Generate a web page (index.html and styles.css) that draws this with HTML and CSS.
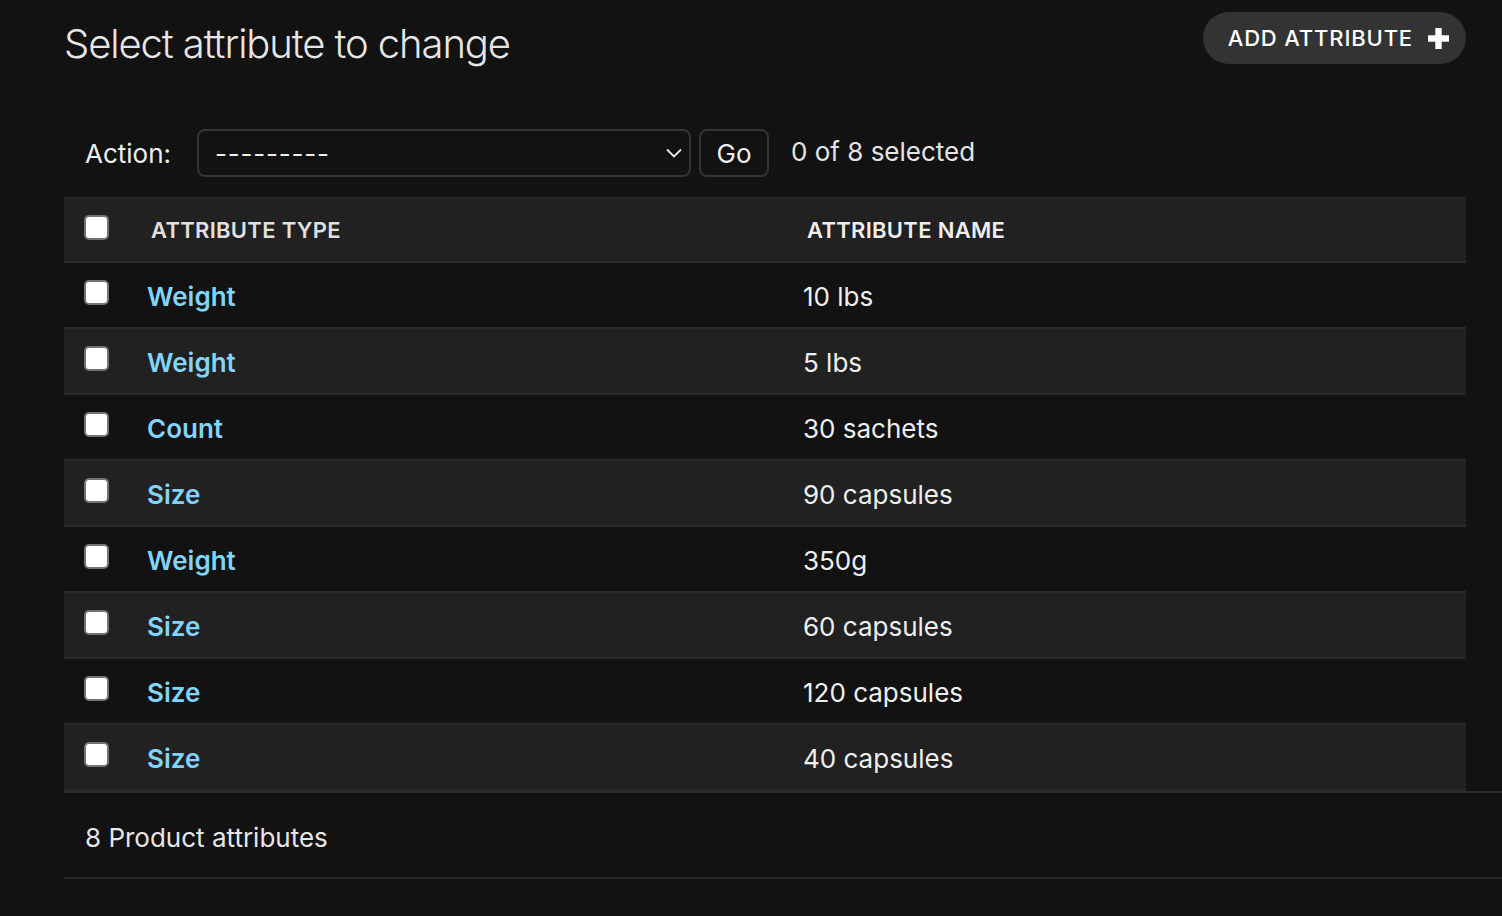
FILE: index.html
```html
<!DOCTYPE html>
<html lang="en">
<head>
<meta charset="utf-8">
<title>Select attribute to change</title>
<link rel="stylesheet" href="styles.css">
</head>
<body>
<div class="page">
  <header class="top">
    <h1 class="title">Select attribute to change</h1>
    <a class="addlink" href="#">ADD ATTRIBUTE
      <svg class="plus" width="21" height="21" viewBox="0 0 21 21" aria-hidden="true">
        <rect x="7.3" y="0" width="6.4" height="21" fill="#ffffff"/>
        <rect x="0" y="7.3" width="21" height="6.4" fill="#ffffff"/>
      </svg>
    </a>
  </header>
  <form class="changelist">
    <div class="actions">
      <label class="action-label">Action:</label>
      <div class="select-wrap">
        <select class="action-select"><option>---------</option></select>
        <svg class="chevron" width="16" height="10" viewBox="0 0 16 10" aria-hidden="true">
          <path d="M1 1.5 L8 8.5 L15 1.5" fill="none" stroke="#e8e8e8" stroke-width="1.8"/>
        </svg>
      </div>
      <button type="button" class="go">Go</button>
      <span class="counter">0 of 8 selected</span>
    </div>
    <table class="results">
      <thead>
        <tr>
          <th class="col-check"><input type="checkbox" class="cb"></th>
          <th class="col-type">ATTRIBUTE TYPE</th>
          <th class="col-name">ATTRIBUTE NAME</th>
        </tr>
      </thead>
      <tbody>
        <tr><td class="col-check"><input type="checkbox" class="cb"></td><td class="col-type"><a href="#">Weight</a></td><td class="col-name">10 lbs</td></tr>
        <tr><td class="col-check"><input type="checkbox" class="cb"></td><td class="col-type"><a href="#">Weight</a></td><td class="col-name">5 lbs</td></tr>
        <tr><td class="col-check"><input type="checkbox" class="cb"></td><td class="col-type"><a href="#">Count</a></td><td class="col-name">30 sachets</td></tr>
        <tr><td class="col-check"><input type="checkbox" class="cb"></td><td class="col-type"><a href="#">Size</a></td><td class="col-name">90 capsules</td></tr>
        <tr><td class="col-check"><input type="checkbox" class="cb"></td><td class="col-type"><a href="#">Weight</a></td><td class="col-name">350g</td></tr>
        <tr><td class="col-check"><input type="checkbox" class="cb"></td><td class="col-type"><a href="#">Size</a></td><td class="col-name">60 capsules</td></tr>
        <tr><td class="col-check"><input type="checkbox" class="cb"></td><td class="col-type"><a href="#">Size</a></td><td class="col-name">120 capsules</td></tr>
        <tr><td class="col-check"><input type="checkbox" class="cb"></td><td class="col-type"><a href="#">Size</a></td><td class="col-name">40 capsules</td></tr>
      </tbody>
    </table>
    <p class="paginator">8 Product attributes</p>
  </form>
</div>
</body>
</html>
```
FILE: styles.css
```css
html, body {
  margin: 0;
  padding: 0;
  background: #121212;
}
body {
  color: #eeeeee;
  font-family: Inter, "Noto Sans", "Liberation Sans", sans-serif;
  font-size: 26px;
}
.page {
  padding: 0 36px 0 64px;
}
.top {
  display: flex;
  justify-content: space-between;
  align-items: flex-start;
  padding-top: 12px;
}
.title {
  margin: 6px 0 0;
  font-size: 40px;
  line-height: 52px;
  font-weight: 300;
  color: #e6e6e6;
  letter-spacing: -1.1px;
}
.addlink {
  display: flex;
  align-items: center;
  gap: 15px;
  height: 52px;
  box-sizing: border-box;
  padding: 0 17px 0 25px;
  border-radius: 26px;
  background: #333333;
  color: #ffffff;
  text-decoration: none;
  font-size: 22px;
  font-weight: 500;
  letter-spacing: 0.85px;
}
.plus {
  display: block;
  margin-top: 1px;
}
.actions {
  display: flex;
  align-items: center;
  height: 48px;
  margin-top: 59px;
  margin-bottom: 20px;
  padding-left: 21px;
}
.action-label {
  width: 112px;
  font-size: 26px;
  color: #eeeeee;
}
.select-wrap {
  position: relative;
  width: 494px;
  height: 48px;
}
.action-select {
  -webkit-appearance: none;
  appearance: none;
  width: 100%;
  height: 48px;
  box-sizing: border-box;
  background: #121212;
  border: 2px solid #353535;
  border-radius: 8px;
  color: #eeeeee;
  font-family: inherit;
  font-size: 26px;
  letter-spacing: 0.8px;
  padding: 0 40px 0 16px;
}
.chevron {
  position: absolute;
  right: 9px;
  top: 19px;
}
.go {
  margin-left: 8px;
  width: 70px;
  height: 48px;
  box-sizing: border-box;
  background: #121212;
  border: 2px solid #353535;
  border-radius: 8px;
  color: #eeeeee;
  font-family: inherit;
  font-size: 26px;
  padding: 0;
}
.counter {
  margin-left: 22px;
  font-size: 26px;
  color: #e4e4e4;
  margin-top: -4px;
}
.results {
  width: 100%;
  border-collapse: collapse;
  table-layout: fixed;
}
.results th {
  background: #212121;
  height: 63px;
  padding: 0;
  border-top: 1px solid #2a2a2a;
  border-bottom: 2px solid #2b2b2b;
  text-align: left;
  font-size: 22px;
  line-height: 28px;
  font-weight: 600;
  color: #e0e0e0;
  letter-spacing: 0.3px;
}
.results td {
  height: 60px;
  padding: 4px 0 0;
  border-bottom: 2px solid #2a2a2a;
  font-size: 26px;
  line-height: 32px;
  vertical-align: middle;
}
.results tbody tr:nth-child(even) td {
  background: #212121;
}
.results .col-check {
  width: 65px;
  box-sizing: border-box;
  padding-left: 20px;
  vertical-align: top;
  padding-top: 17px;
}
.results td.col-check {
  height: 64px;
}
.results .col-type {
  width: 656px;
  box-sizing: border-box;
  padding-left: 18px;
}
.results th.col-type,
.results th.col-name {
  padding-left: 22px;
}
.results .col-name {
  padding-left: 18px;
  color: #eeeeee;
}
.results a {
  color: #81d4fa;
  font-weight: 600;
  text-decoration: none;
}
.cb {
  -webkit-appearance: none;
  appearance: none;
  display: block;
  margin: 0;
  width: 25px;
  height: 25px;
  box-sizing: border-box;
  background: #ffffff;
  border: 2px solid #737373;
  border-radius: 5px;
}
.paginator {
  margin: 0 -36px 0 0;
  display: flex;
  align-items: center;
  padding: 4px 0 0 21px;
  box-sizing: content-box;
  border-top: 2px solid #2a2a2a;
  border-bottom: 2px solid #2a2a2a;
  font-size: 26px;
  color: #e6e6e6;
  height: 80px;
}
```
